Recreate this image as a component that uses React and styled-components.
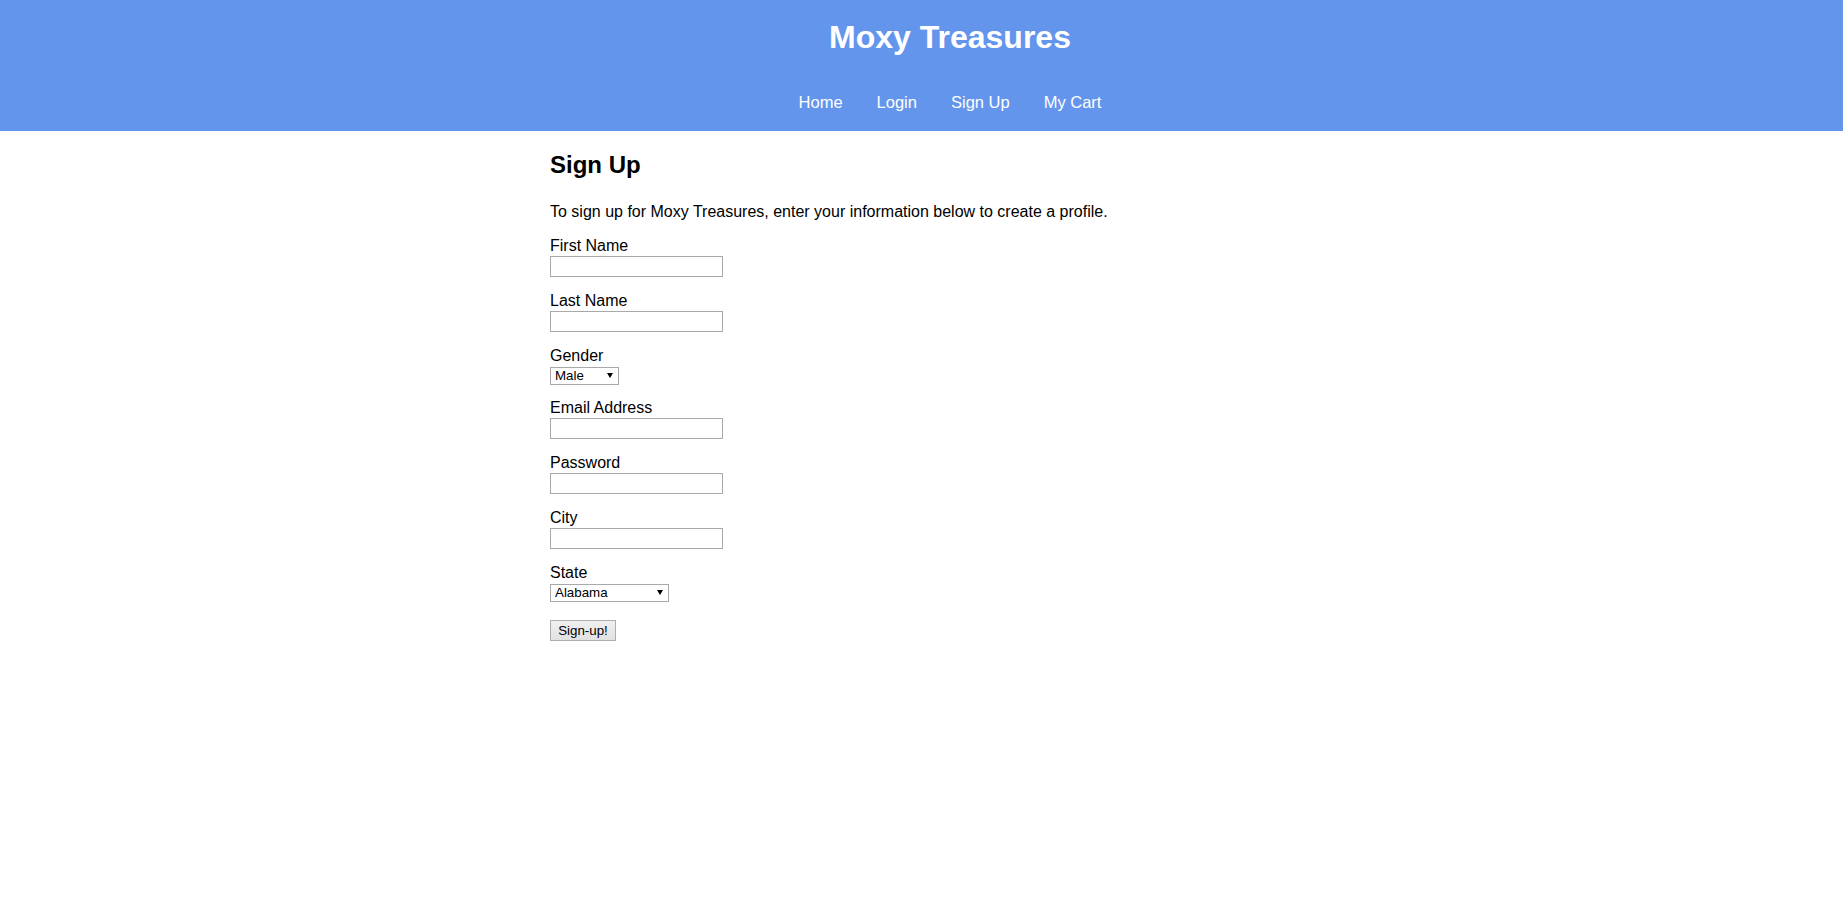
import { createGlobalStyle, styled } from "styled-components";

const GlobalStyle = createGlobalStyle`
  html {
    overflow-x: hidden;
  }

  body {
    margin: 0;
    font-family: "Liberation Sans", Arial, sans-serif;
    font-size: 16px;
    color: #000;
    background: #fff;
  }
`;

const Page = styled.div`
  width: 1900px;
`;

const Header = styled.header`
  background: #6495ed;
  padding: 19px 0;
  text-align: center;
  color: #fff;
`;

const Title = styled.h1`
  margin: 0;
  font-size: 32px;
  line-height: 37px;
  font-weight: 700;
`;

const Nav = styled.nav`
  display: flex;
  justify-content: center;
  gap: 34px;
  margin-top: 37px;
`;

const NavLink = styled.a`
  font-size: 16.5px;
  line-height: 19px;
  color: #fff;
  text-decoration: none;
  cursor: pointer;
`;

const Main = styled.main`
  width: 800px;
  margin: 0 auto;
`;

const Heading = styled.h2`
  margin: 20px 0 0;
  font-size: 24px;
  line-height: 28px;
  font-weight: 700;
`;

const Intro = styled.p`
  margin: 23.5px 0 0;
  line-height: 18px;
`;

const Form = styled.form`
  margin-top: 16.5px;
`;

const Field = styled.div`
  margin-bottom: 15px;
`;

const Label = styled.label`
  display: block;
  line-height: 18px;
`;

const Input = styled.input`
  display: block;
  box-sizing: border-box;
  width: 173px;
  height: 21px;
  margin: 1px 0 0;
  padding: 1px 2px;
  border: 1px solid #a9a9a9;
  border-radius: 0;
  font-family: inherit;
  font-size: 13.33px;
  background: #fff;
  outline: none;
`;

const SelectWrap = styled.div`
  position: relative;
  width: ${(p) => p.$width}px;
  height: 18px;
  margin-top: 1px;
`;

const Select = styled.select`
  appearance: none;
  box-sizing: border-box;
  width: 100%;
  height: 100%;
  margin: 0;
  padding: 0 0 0 4px;
  border: 1px solid #a9a9a9;
  border-radius: 0;
  background: #fff;
  color: #000;
  font-family: inherit;
  font-size: 13.33px;
  line-height: 16px;
  outline: none;
`;

const Arrow = styled.svg`
  position: absolute;
  right: 6px;
  top: 7px;
  width: 6px;
  height: 5px;
  pointer-events: none;
`;

const Submit = styled.button`
  box-sizing: border-box;
  width: 66px;
  height: 21px;
  margin-top: 4px;
  padding: 0;
  border: 1px solid #adadad;
  border-radius: 0;
  background: linear-gradient(#f0f0f0, #e1e1e1);
  color: #000;
  font-family: inherit;
  font-size: 13.33px;
  cursor: pointer;
`;

const states = [
  "Alabama", "Alaska", "Arizona", "Arkansas", "California", "Colorado",
  "Connecticut", "Delaware", "Florida", "Georgia", "Hawaii", "Idaho",
  "Illinois", "Indiana", "Iowa", "Kansas", "Kentucky", "Louisiana", "Maine",
  "Maryland", "Massachusetts", "Michigan", "Minnesota", "Mississippi",
  "Missouri", "Montana", "Nebraska", "Nevada", "New Hampshire", "New Jersey",
  "New Mexico", "New York", "North Carolina", "North Dakota", "Ohio",
  "Oklahoma", "Oregon", "Pennsylvania", "Rhode Island", "South Carolina",
  "South Dakota", "Tennessee", "Texas", "Utah", "Vermont", "Virginia",
  "Washington", "West Virginia", "Wisconsin", "Wyoming",
];

const TextField = ({ id, label, type = "text" }) => (
  <Field>
    <Label htmlFor={id}>{label}</Label>
    <Input id={id} name={id} type={type} />
  </Field>
);

const SelectField = ({ id, label, width, options }) => (
  <Field>
    <Label htmlFor={id}>{label}</Label>
    <SelectWrap $width={width}>
      <Select id={id} name={id}>
        {options.map((o) => (
          <option key={o}>{o}</option>
        ))}
      </Select>
      <Arrow viewBox="0 0 6 5">
        <path d="M0 0h6L3 5z" fill="#000" />
      </Arrow>
    </SelectWrap>
  </Field>
);

const App = () => (
  <Page>
    <GlobalStyle />
    <Header>
      <Title>Moxy Treasures</Title>
      <Nav>
        <NavLink>Home</NavLink>
        <NavLink>Login</NavLink>
        <NavLink>Sign Up</NavLink>
        <NavLink>My Cart</NavLink>
      </Nav>
    </Header>

    <Main>
      <Heading>Sign Up</Heading>
      <Intro>
        To sign up for Moxy Treasures, enter your information below to create a profile.
      </Intro>

      <Form onSubmit={(e) => e.preventDefault()}>
        <TextField id="firstName" label="First Name" />
        <TextField id="lastName" label="Last Name" />
        <SelectField id="gender" label="Gender" width={69} options={["Male", "Female"]} />
        <TextField id="email" label="Email Address" type="email" />
        <TextField id="password" label="Password" type="password" />
        <TextField id="city" label="City" />
        <SelectField id="state" label="State" width={119} options={states} />
        <Submit type="submit">Sign-up!</Submit>
      </Form>
    </Main>
  </Page>
);

export default App;
